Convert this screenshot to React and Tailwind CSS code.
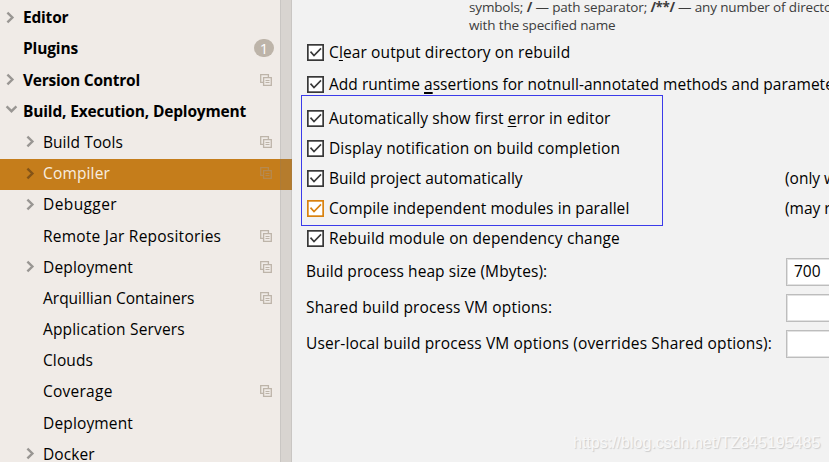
const TREE = [
  { label: "Editor", level: 0, arrow: "right", track: "tracking-[-0.2px]" },
  { label: "Plugins", level: 0, badge: "1", track: "tracking-[-0.15px]" },
  { label: "Version Control", level: 0, arrow: "right", copy: true, track: "tracking-[-0.22px]" },
  { label: "Build, Execution, Deployment", level: 0, arrow: "down", track: "tracking-[-0.17px]" },
  { label: "Build Tools", level: 1, arrow: "right", copy: true, track: "tracking-[0.05px]" },
  { label: "Compiler", level: 1, arrow: "right", copy: true, selected: true, track: "tracking-[0.15px]" },
  { label: "Debugger", level: 1, arrow: "right", track: "tracking-[0.4px]" },
  { label: "Remote Jar Repositories", level: 1, copy: true, track: "tracking-[0.23px]" },
  { label: "Deployment", level: 1, arrow: "right", copy: true, track: "tracking-[0.15px]" },
  { label: "Arquillian Containers", level: 1, copy: true },
  { label: "Application Servers", level: 1, track: "tracking-[0.17px]" },
  { label: "Clouds", level: 1, track: "tracking-[0.1px]" },
  { label: "Coverage", level: 1, copy: true, track: "tracking-[0.25px]" },
  { label: "Deployment", level: 1, track: "tracking-[0.15px]" },
  { label: "Docker", level: 1, arrow: "right", track: "tracking-[0.1px]" },
];

function Arrow({ dir, selected }) {
  const color = selected ? "#845417" : "#999693";
  return (
    <svg className="h-[13px] w-[13px] shrink-0" viewBox="0 0 13 13" fill="none" stroke={color} strokeWidth="2.4">
      {dir === "down" ? <path d="M1.6 2.4L6.5 7.2L11.4 2.4" /> : <path d="M2.4 1.6L7.4 6.5L2.4 11.4" />}
    </svg>
  );
}

function CopyIcon({ selected }) {
  const a = selected ? "#b6894e" : "#bdb4a9";
  return (
    <svg className="h-3 w-3 shrink-0" viewBox="0 0 12 12" fill="none">
      <path d="M3.4 8.4H0.7V0.7H8.4V3" stroke={a} strokeWidth="1.3" />
      <path d="M3.6 3.6H11.3V11.3H3.6Z" stroke={a} strokeWidth="1.3" />
      <path d="M5.5 6.5H9.5M5.5 8.5H9.5" stroke={a} />
    </svg>
  );
}

function TreeRow({ item }) {
  const pad = item.level === 0 ? "pl-[5px]" : "pl-[25px]";
  return (
    <div className={`flex h-[31.2px] shrink-0 items-center ${pad} pb-[2.8px] pr-[20px] ${item.selected ? "bg-[#c57d1b] text-[#f8eee0]" : ""}`}>
      <div className="flex w-[18px] shrink-0">
        {item.arrow && <Arrow dir={item.arrow} selected={item.selected} />}
      </div>
      <span className={`grow whitespace-nowrap text-[15.5px] leading-5 ${item.level === 0 ? "font-bold" : ""} ${item.track || ""}`}>
        {item.label}
      </span>
      {item.badge && (
        <span className="mr-[-2px] flex h-[18px] w-5 items-center justify-center rounded-full bg-[#bdb4a9] text-[15px] leading-none text-white">
          {item.badge}
        </span>
      )}
      {item.copy && <CopyIcon selected={item.selected} />}
    </div>
  );
}

function Check({ focus }) {
  const c = focus ? "#d9820f" : "#383838";
  return (
    <svg className="h-[17px] w-[17px] shrink-0" viewBox="0 0 17 17" fill="none" stroke={c}>
      <rect x="0.85" y="0.85" width="15.3" height="15.3" fill="#fff" strokeWidth="1.7" />
      <path d="M3.5 7.6L7 11.6L14 4.4" strokeWidth="1.6" />
    </svg>
  );
}

function Option({ height, focus, note, track = "", children }) {
  return (
    <div className={`flex shrink-0 items-center ${height} pl-[15px]`}>
      <Check focus={focus} />
      <span className={`ml-[5px] w-[456px] shrink-0 whitespace-nowrap pb-px ${track}`}>{children}</span>
      {note && <span className="whitespace-nowrap pb-px">{note}</span>}
    </div>
  );
}

function Field({ label, value, track = "" }) {
  return (
    <div className="flex h-9 shrink-0 items-start pl-[14px] pt-1">
      <span className={`w-[480px] shrink-0 whitespace-nowrap leading-[26px] ${track}`}>{label}</span>
      <div className="flex h-7 w-[120px] shrink-0 items-center border border-[#bdbdbd] bg-white pb-[2px] pl-[7px] ring-1 ring-inset ring-[#e2e2e2]">
        {value}
      </div>
    </div>
  );
}

const Key = ({ children, thick }) => (
  <span className={`underline underline-offset-2 ${thick ? "decoration-2" : "decoration-1"}`}>{children}</span>
);

export default function App() {
  return (
    <div className="relative flex h-[462px] w-[829px] overflow-hidden bg-[#f2f2f2] font-['Open_Sans','Noto_Sans',sans-serif] text-[15.5px] leading-5 text-black">
      <aside className="relative flex w-[292px] shrink-0 flex-col overflow-hidden bg-[#f0ebe7] pt-[3px]">
        {TREE.map((item, i) => (
          <TreeRow key={i} item={item} />
        ))}
        <div className="absolute inset-y-0 right-0 w-3 border-x border-[#777]/15 bg-[#777]/20" />
      </aside>
      <main className="flex min-w-0 grow flex-col overflow-hidden">
        <div className="h-[37px] shrink-0 overflow-hidden pl-[177px]">
          <p className="mt-[-2px] whitespace-nowrap text-[13.5px] leading-[18px] tracking-[-0.15px] text-[#3c3c3c]">
            symbols; <b>/</b> — path separator; <b className="tracking-[-0.4px]">/**/</b> — any number of directories; file
            <br />
            with the specified name
          </p>
        </div>
        <Option height="h-[31px]" track="tracking-[0.12px]">C<Key>l</Key>ear output directory on rebuild</Option>
        <Option height="h-[33px]" track="tracking-[0.03px]">Add runtime <Key thick>a</Key>ssertions for notnull-annotated methods and parameters</Option>
        <Option height="h-[33px] pt-[2px]" track="tracking-[0.07px]">Automatically show first <Key>e</Key>rror in editor</Option>
        <Option height="h-[30px] pb-px" track="tracking-[0.11px]">Display notification on build completion</Option>
        <Option height="h-[30px] pb-px" track="tracking-[0.04px]" note="(only works while not running)">Build project automatically</Option>
        <Option height="h-[30px] pb-px" track="tracking-[0.07px]" focus note="(may require larger heap)">Compile independent modules in parallel</Option>
        <Option height="h-[30px] pb-px" track="tracking-[0.15px]">Rebuild module on dependency change</Option>
        <Field label="Build process heap size (Mbytes):" value="700" track="tracking-[0.08px]" />
        <Field label="Shared build process VM options:" track="tracking-[0.15px]" />
        <Field label="User-local build process VM options (overrides Shared options):" track="tracking-[0.145px]" />
      </main>
      <div className="absolute left-[301px] top-[95px] h-[131px] w-[362px] border border-[#3b3bea]" />
      <div className="absolute left-[573px] top-[433px] whitespace-nowrap font-['Liberation_Sans',Arial,sans-serif] text-[16px] leading-5 text-[#f8f8f8] [text-shadow:1px_1px_1px_#ccc]">
        https://blog.csdn.net/TZ845195485
      </div>
    </div>
  );
}
